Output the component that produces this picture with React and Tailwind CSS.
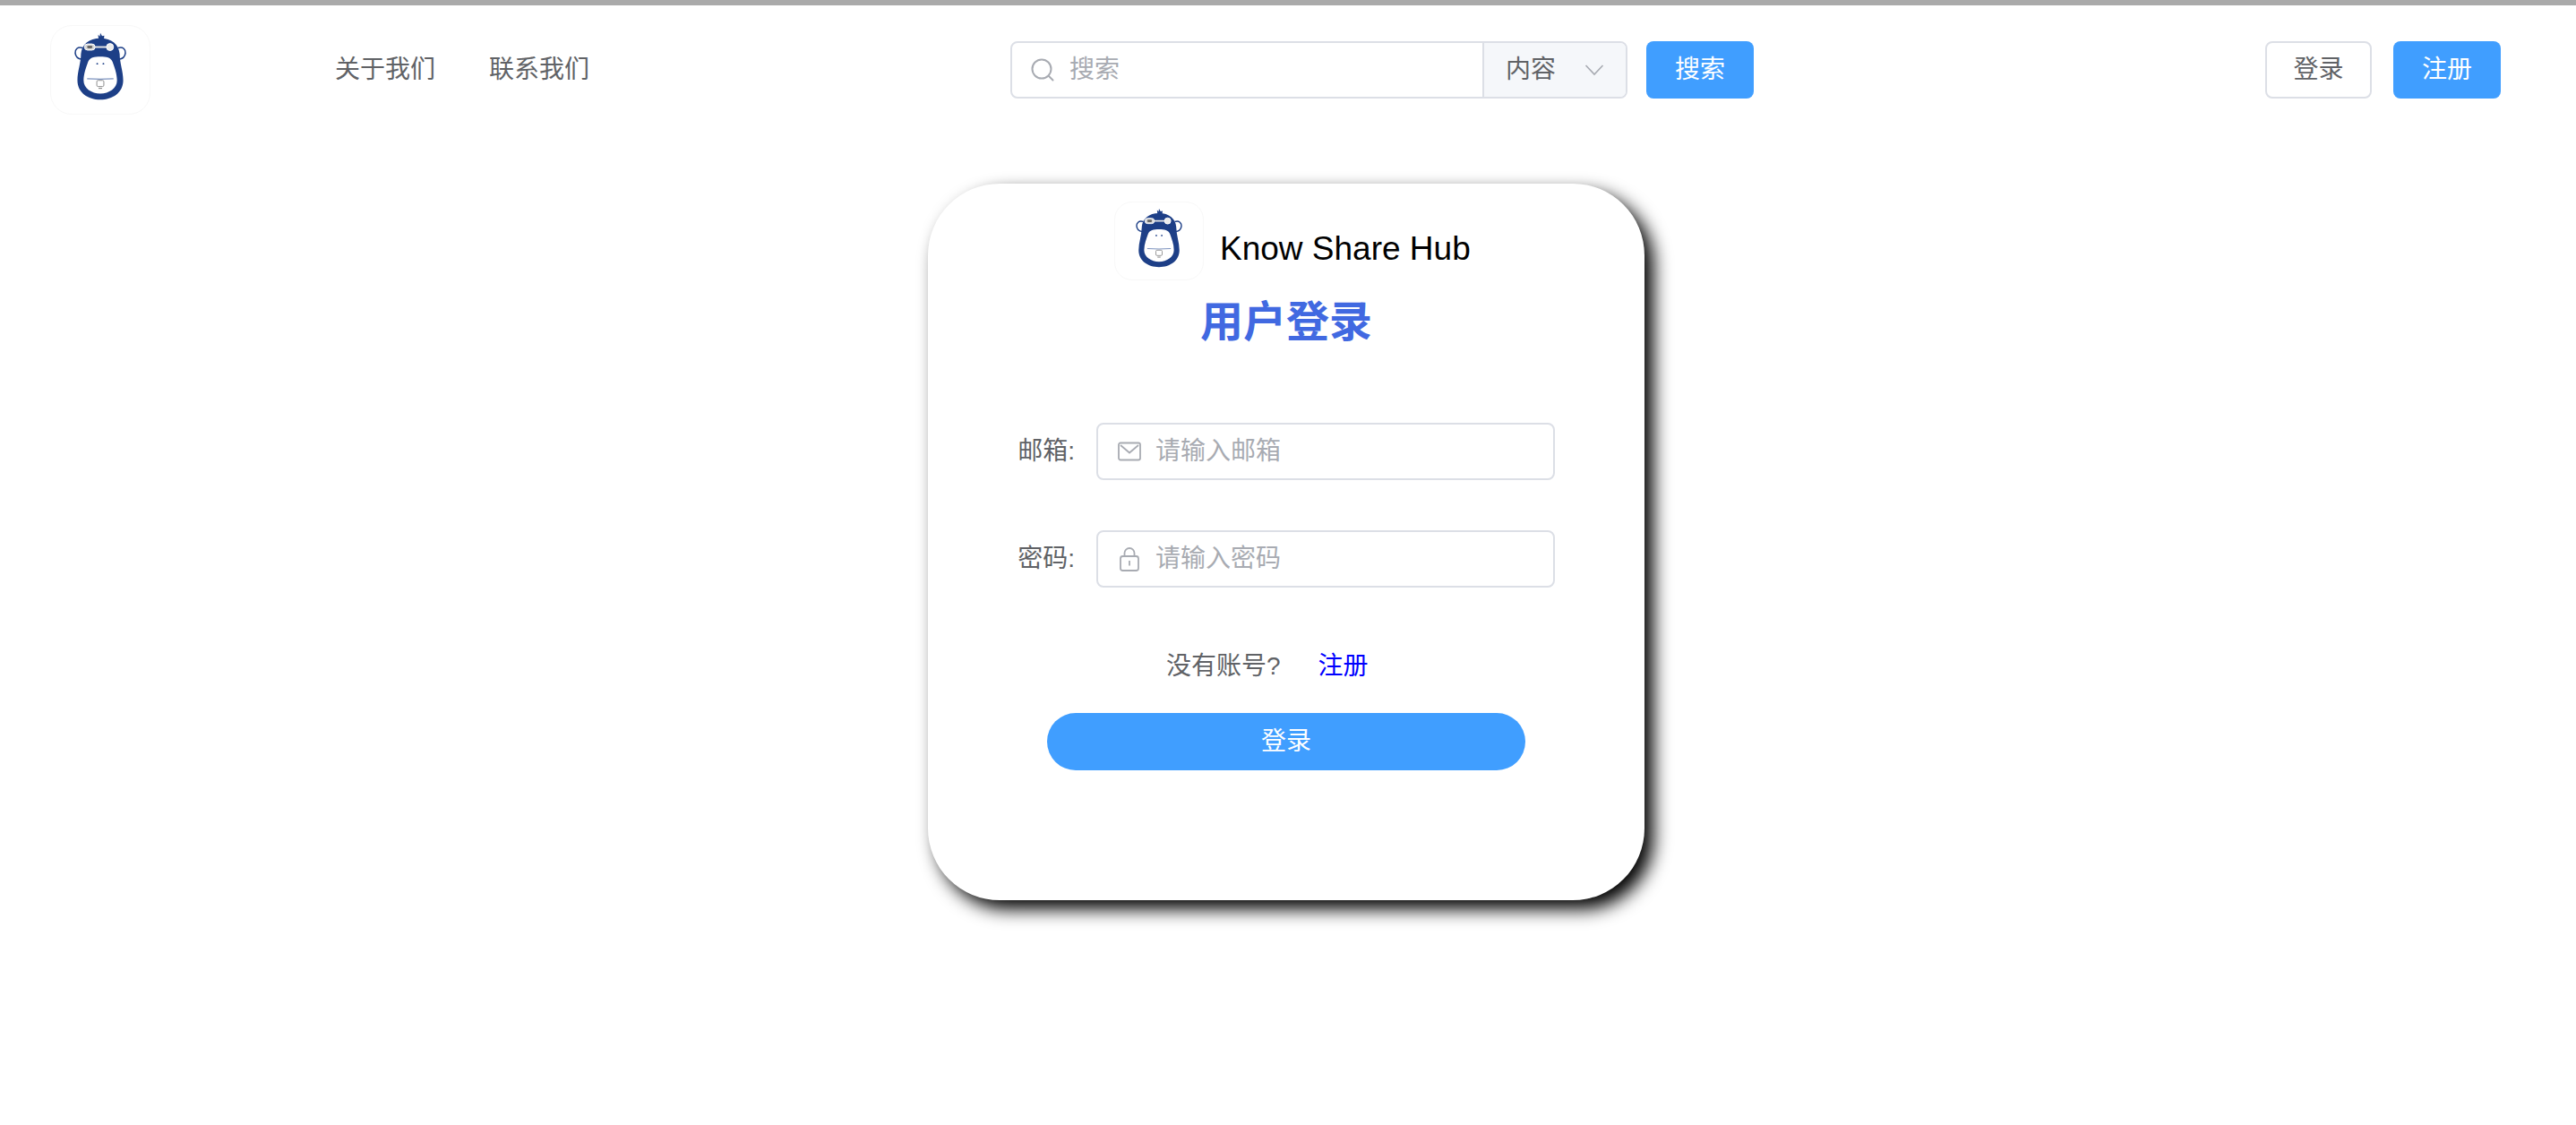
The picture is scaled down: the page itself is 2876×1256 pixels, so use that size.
import React from "react";

function Logo({ className }) {
  return (
    <div className={`shrink-0 border border-[#f8f8f8] bg-white ${className}`}>
      <svg viewBox="0 0 112 100" preserveAspectRatio="none" className="block h-full w-full">
        <path d="M54 15 L53.5 10 L55.5 12 L56 8 L58 11.5 L60.5 11 L60 16 Z" fill="#1d3f87" />
        <path d="M36 25 C30 23 27 27 27.5 31 C28 35 31 37.5 35 38" fill="none" stroke="#1d3f87" strokeWidth="1.6" />
        <path d="M76 25 C82 23 85 27 84.5 31 C84 35 81 37.5 77 38" fill="none" stroke="#1d3f87" strokeWidth="1.6" />
        <path d="M56 14 C43 14 35 21 34 32 C34 42 30 52 30 62 C30 76 42 84 56 84 C70 84 82 76 82 62 C82 52 78 42 78 32 C77 21 69 14 56 14 Z" fill="#1d3f87" />
        <path d="M56 35 C49 35 44 36 42 41 C40 47 37 54 37 62 C37 71 46 77 56 77 C66 77 75 71 75 62 C75 54 72 47 70 41 C68 36 63 35 56 35 Z" fill="#ffffff" />
        <rect x="46" y="23" width="20" height="2" fill="#e6e6e6" />
        <rect x="38" y="20.5" width="12" height="7" rx="3.5" fill="#d8d8d8" stroke="#ffffff" strokeWidth="1" />
        <rect x="41" y="22.5" width="6" height="3" rx="1.5" fill="#666666" />
        <circle cx="67" cy="24" r="4" fill="#ececec" stroke="#ffffff" strokeWidth="1" />
        <circle cx="52.5" cy="43" r="1" fill="#1d3f87" />
        <circle cx="59.5" cy="43" r="1" fill="#1d3f87" />
        <path d="M41 60 Q56 61 71 60" fill="none" stroke="#7d93bf" strokeWidth="1.2" />
        <rect x="52" y="62" width="8" height="7" rx="1.5" fill="#fff" stroke="#8d8d8d" strokeWidth="1" />
        <path d="M54 71 H58" stroke="#8d8d8d" strokeWidth="1.2" />
      </svg>
    </div>
  );
}

function SearchGlyph() {
  return (
    <svg width="28" height="28" viewBox="0 0 28 28" fill="none" stroke="#a8abb2" strokeWidth="2" className="shrink-0">
      <circle cx="13" cy="13" r="10.5" />
      <path d="M21 21 L25.5 25.5" strokeLinecap="round" />
    </svg>
  );
}

function Chevron() {
  return (
    <svg width="22" height="14" viewBox="0 0 22 14" fill="none" stroke="#a8abb2" strokeWidth="1.6" className="shrink-0">
      <path d="M1.5 2 L11 12 L20.5 2" />
    </svg>
  );
}

function MailGlyph() {
  return (
    <svg width="26" height="26" viewBox="0 0 26 26" fill="none" stroke="#a8abb2" strokeWidth="1.8" className="shrink-0">
      <rect x="1" y="3.5" width="24" height="19" rx="2" />
      <path d="M3 6 L13 14.5 L23 6" />
    </svg>
  );
}

function LockGlyph() {
  return (
    <svg width="26" height="28" viewBox="0 0 26 28" fill="none" stroke="#a8abb2" strokeWidth="1.8" className="shrink-0">
      <rect x="3" y="11" width="20" height="16" rx="2.5" />
      <path d="M7.5 11 V7.5 A5.5 5.5 0 0 1 18.5 7.5 V11" />
      <path d="M13 16 V21.5" />
    </svg>
  );
}

function Field({ label, placeholder, icon, className }) {
  return (
    <div className={`flex items-center ${className}`}>
      <label className="w-[188px] pr-[24px] text-right text-[28px] leading-[64px] text-[#606266]">{label}</label>
      <div className="flex h-[64px] w-[512px] items-center rounded-[8px] border-2 border-[#dcdfe6] bg-white pl-[22px]">
        {icon}
        <input
          placeholder={placeholder}
          className="ml-[16px] h-full min-w-0 flex-1 bg-transparent text-[28px] text-[#606266] outline-none placeholder:text-[#a8abb2]"
        />
      </div>
    </div>
  );
}

export default function App() {
  return (
    <div className="min-h-[1256px] bg-white font-['Liberation_Sans','Noto_Sans_CJK_SC',sans-serif]">
      <div className="h-[6px] bg-[#aaaaaa]" />
      <header className="flex items-center pt-[22px] pl-[56px] pr-[84px]">
        <Logo className="h-[100px] w-[112px] rounded-[24px]" />
        <nav className="ml-[206px] flex gap-[60px] text-[28px] leading-[40px] text-[#606266]">
          <a>关于我们</a>
          <a>联系我们</a>
        </nav>
        <div className="ml-[470px] flex h-[64px] w-[689px] rounded-[8px] border-2 border-[#dcdfe6] bg-white">
          <div className="flex min-w-0 flex-1 items-center pl-[20px]">
            <SearchGlyph />
            <input
              placeholder="搜索"
              className="ml-[16px] h-full min-w-0 flex-1 bg-transparent text-[28px] text-[#606266] outline-none placeholder:text-[#a8abb2]"
            />
          </div>
          <div className="flex w-[160px] items-center rounded-r-[6px] border-l-2 border-[#dcdfe6] bg-[#f5f7fa] pl-[24px] text-[28px] text-[#606266]">
            <span>内容</span>
            <span className="ml-[32px] flex"><Chevron /></span>
          </div>
        </div>
        <button className="ml-[21px] h-[64px] w-[120px] rounded-[8px] bg-[#409eff] text-[28px] text-white">搜索</button>
        <button className="ml-auto h-[64px] w-[119px] rounded-[8px] border-2 border-[#dcdfe6] bg-white text-[28px] text-[#606266]">登录</button>
        <button className="ml-[24px] h-[64px] w-[120px] rounded-[8px] bg-[#409eff] text-[28px] text-white">注册</button>
      </header>

      <main className="flex justify-center pt-[77px] pr-[4px]">
        <section className="flex h-[800px] w-[800px] flex-col rounded-[80px] bg-white pt-[20px] shadow-[10px_10px_20px_#000000]">
          <div className="flex h-[88px] items-center pl-[208px]">
            <Logo className="h-[88px] w-[100px] rounded-[20px]" />
            <span className="mt-[18px] ml-[18px] text-[37px] leading-[44px] text-black">Know Share Hub</span>
          </div>
          <h1 className="mt-[15px] text-center text-[48px] leading-[64px] font-bold text-[#4169e1]">用户登录</h1>
          <Field className="mt-[80px]" label="邮箱:" placeholder="请输入邮箱" icon={<MailGlyph />} />
          <Field className="mt-[56px]" label="密码:" placeholder="请输入密码" icon={<LockGlyph />} />
          <div className="mt-[64px] flex h-[48px] items-center pl-[266px] text-[28px]">
            <span className="text-[#606266]">没有账号?</span>
            <a className="ml-[42px] text-[#0000ff]">注册</a>
          </div>
          <button className="mt-[28px] ml-[133px] h-[64px] w-[534px] rounded-full bg-[#409eff] text-[28px] text-white">登录</button>
        </section>
      </main>
    </div>
  );
}
